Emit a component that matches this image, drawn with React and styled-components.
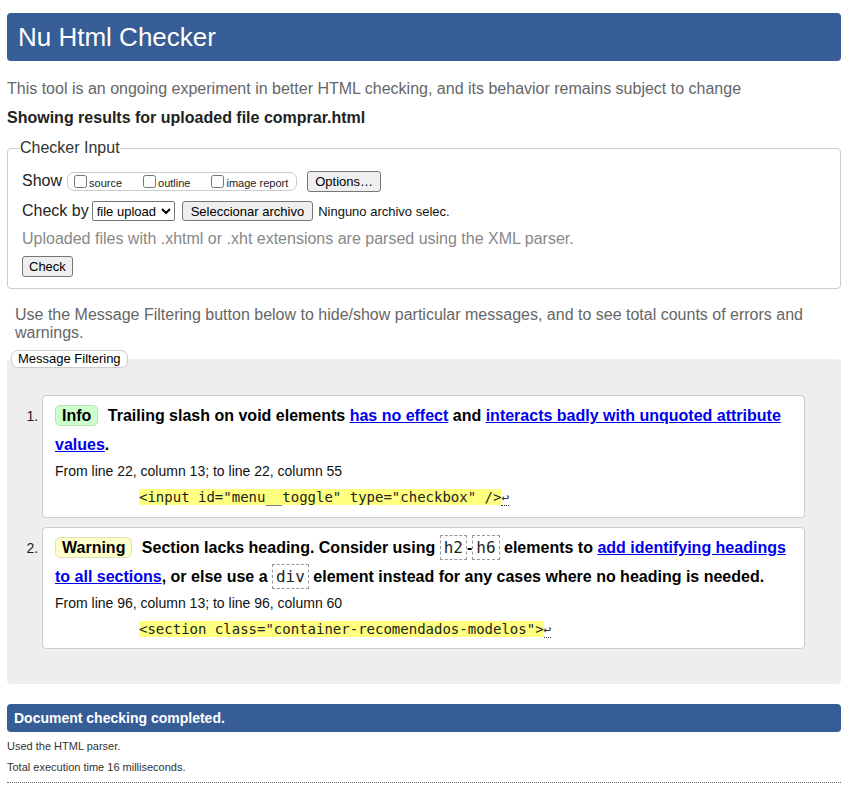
import React from "react";
import styled, { createGlobalStyle } from "styled-components";

const GlobalStyle = createGlobalStyle`
  body {
    margin: 0;
    background: #fff;
    color: #222;
    font-family: "Liberation Sans", Arial, sans-serif;
  }
`;

const Page = styled.div`
  padding: 13px 4px 0 7px;
`;

const Header = styled.h1`
  margin: 0;
  height: 48px;
  line-height: 48px;
  padding-left: 11px;
  background: #365d95;
  border-radius: 4px;
  color: #fff;
  font-size: 26px;
  font-weight: normal;
`;

const Intro = styled.p`
  margin: 19px 0 0;
  font-size: 16px;
  line-height: 18px;
  color: ${(p) => (p.$muted ? "#666" : "#222")};
  font-weight: ${(p) => (p.$bold ? "bold" : "normal")};
  padding: ${(p) => (p.$inset ? "0 8px" : "0")};
`;

const InputFieldset = styled.fieldset`
  margin: 12px 0 0;
  border: 1px solid #ccc;
  border-radius: 4px;
  padding: 13px 14px 11px;
`;

const InputLegend = styled.legend`
  font-size: 16px;
  color: #333;
  padding: 0;
  margin-left: -2px;
`;

const Row = styled.div`
  display: flex;
  align-items: center;
  height: 22px;
  margin-top: ${(p) => p.$gap || 0}px;
  font-size: 16px;
  color: #222;
`;

const Pill = styled.span`
  display: inline-flex;
  align-items: center;
  height: 17px;
  margin-left: 5px;
  padding: 0 8px 0 6px;
  border: 1px solid #ccc;
  border-radius: 7px;
  gap: 21px;
`;

const Check = styled.label`
  display: inline-flex;
  align-items: center;
  font-size: 11px;
  color: #222;
  input {
    margin: 0 2px 0 0;
    width: 13px;
    height: 13px;
  }
  span {
    position: relative;
    top: 2px;
  }
`;

const Button = styled.button`
  font-family: "Liberation Sans", Arial, sans-serif;
  font-size: 13px;
  color: #000;
  background: #efefef;
  border: 1px solid #767676;
  border-radius: 3px;
  height: ${(p) => p.$h || 21}px;
  padding: 0 ${(p) => p.$px || 7}px;
  margin-left: ${(p) => p.$ml || 0}px;
`;

const Select = styled.select`
  font-family: "Liberation Sans", Arial, sans-serif;
  font-size: 13px;
  color: #000;
  height: 20px;
  width: 83px;
  margin-left: 3px;
  border: 1px solid #767676;
  border-radius: 2px;
  background: #fff;
`;

const FileText = styled.span`
  font-size: 13px;
  color: #111;
  margin-left: 5px;
`;

const Hint = styled.p`
  margin: 8px 0 0;
  font-size: 16px;
  line-height: 18px;
  color: #888;
`;

const FilterFieldset = styled.fieldset`
  margin: 8px 0 0;
  padding: 0 36px 35px 0;
  border: none;
  border-radius: 4px;
  background: #eee;
`;

const FilterLegend = styled.legend`
  margin-left: 4px;
  padding: 0 6px;
  height: 16px;
  line-height: 16px;
  font-size: 13px;
  color: #000;
  background: #fff;
  border: 1px solid #ccc;
  border-radius: 7px;
`;

const List = styled.ol`
  margin: 27px 0 0;
  padding-left: 35px;
`;

const Item = styled.li`
  font-size: 14px;
  color: #111;
  background: #fff;
  border: 1px solid #ccc;
  border-radius: 4px;
  padding: 5px 12px 11px;
  margin-bottom: 9px;
  &:last-child {
    margin-bottom: 0;
    padding-bottom: 10px;
  }
  &::marker {
    color: #222;
  }
`;

const Message = styled.p`
  margin: 0;
  font-size: 16px;
  line-height: 29px;
  font-weight: bold;
  color: #000;
  a {
    color: #00e;
    text-decoration: underline;
  }
`;

const Badge = styled.strong`
  display: inline-block;
  line-height: 19px;
  padding: 0 6px;
  margin-right: 5px;
  border-radius: 5px;
  background: ${(p) => (p.$kind === "info" ? "#ccffcc" : "#ffffcc")};
  border: 1px solid ${(p) => (p.$kind === "info" ? "#b5e3b5" : "#e3e3b5")};
  color: #000;
`;

const Tag = styled.code`
  font-family: "DejaVu Sans Mono", monospace;
  font-weight: normal;
  font-size: 16px;
  padding: 2px 3px;
  border: 1px dashed #999;
  color: #222;
`;

const Location = styled.p`
  margin: 4px 0 0;
  font-size: 14px;
  line-height: 17px;
  color: #111;
`;

const Extract = styled.p`
  margin: 9px 0 0;
  padding-left: 84px;
  line-height: 17px;
  font-family: "DejaVu Sans Mono", monospace;
  font-size: 14px;
  color: #222;
  code {
    font-family: inherit;
    background: #ffff80;
  }
`;

const Lf = styled.span`
  font-size: 13px;
  color: #333;
  border-bottom: 1px dotted #333;
`;

const DoneBar = styled.h2`
  margin: 20px 0 0;
  height: 28px;
  line-height: 28px;
  padding-left: 7px;
  background: #365d95;
  border-radius: 4px;
  color: #fff;
  font-size: 14px;
  font-weight: bold;
`;

const Stat = styled.p`
  margin: ${(p) => p.$mt}px 0 0;
  font-size: 11px;
  line-height: 13px;
  color: #333;
`;

const Rule = styled.hr`
  margin: 8px 0 0;
  border: none;
  border-top: 1px dotted #666;
`;

export default function App() {
  return (
    <Page>
      <GlobalStyle />
      <Header>Nu Html Checker</Header>
      <Intro $muted>
        This tool is an ongoing experiment in better HTML checking, and its behavior remains subject to change
      </Intro>
      <Intro $bold style={{ marginTop: 11 }}>
        Showing results for uploaded file comprar.html
      </Intro>

      <InputFieldset>
        <InputLegend>Checker Input</InputLegend>
        <Row>
          Show
          <Pill>
            <Check>
              <input type="checkbox" />
              <span>source</span>
            </Check>
            <Check>
              <input type="checkbox" />
              <span>outline</span>
            </Check>
            <Check>
              <input type="checkbox" />
              <span>image report</span>
            </Check>
          </Pill>
          <Button $ml={10}>Options…</Button>
        </Row>
        <Row $gap={8}>
          Check by
          <Select defaultValue="file">
            <option value="file">file upload</option>
          </Select>
          <Button $ml={7} $h={20} $px={8}>
            Seleccionar archivo
          </Button>
          <FileText>Ninguno archivo selec.</FileText>
        </Row>
        <Hint>Uploaded files with .xhtml or .xht extensions are parsed using the XML parser.</Hint>
        <Row $gap={7}>
          <Button $px={6}>Check</Button>
        </Row>
      </InputFieldset>

      <Intro $muted $inset style={{ marginTop: 17 }}>
        Use the Message Filtering button below to hide/show particular messages, and to see total counts of errors and
        warnings.
      </Intro>

      <FilterFieldset>
        <FilterLegend>Message Filtering</FilterLegend>
        <List>
          <Item>
            <Message>
              <Badge $kind="info">Info</Badge> Trailing slash on void elements <a href="#">has no effect</a> and{" "}
              <a href="#">interacts badly with unquoted attribute values</a>.
            </Message>
            <Location>From line 22, column 13; to line 22, column 55</Location>
            <Extract>
              <code>{'<input id="menu__toggle" type="checkbox" />'}</code>
              <Lf>↩</Lf>
            </Extract>
          </Item>
          <Item>
            <Message>
              <Badge $kind="warning">Warning</Badge> Section lacks heading. Consider using <Tag>h2</Tag>-<Tag>h6</Tag>{" "}
              elements to <a href="#">add identifying headings to all sections</a>, or else use a <Tag>div</Tag> element
              instead for any cases where no heading is needed.
            </Message>
            <Location>From line 96, column 13; to line 96, column 60</Location>
            <Extract>
              <code>{'<section class="container-recomendados-modelos">'}</code>
              <Lf>↩</Lf>
            </Extract>
          </Item>
        </List>
      </FilterFieldset>

      <DoneBar>Document checking completed.</DoneBar>
      <Stat $mt={8}>Used the HTML parser.</Stat>
      <Stat $mt={8}>Total execution time 16 milliseconds.</Stat>
      <Rule />
    </Page>
  );
}
